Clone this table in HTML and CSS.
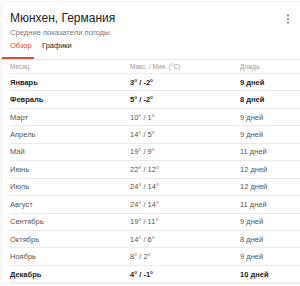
FILE: index.html
```html
<!DOCTYPE html>
<html lang="ru">
<head>
<meta charset="utf-8">
<link rel="stylesheet" href="styles.css">
</head>
<body>
<div class="card">
  <div class="head">
    <div class="titles">
      <div class="title">Мюнхен, Германия</div>
      <div class="subtitle">Средние показатели погоды</div>
    </div>
    <svg class="menu" width="4" height="10" viewBox="0 0 4 10"><circle cx="2" cy="1.5" r="0.9" fill="#666"/><circle cx="2" cy="5" r="0.9" fill="#666"/><circle cx="2" cy="8.5" r="0.9" fill="#666"/></svg>
  </div>
  <div class="tabs">
    <div class="tab active">Обзор</div>
    <div class="tab">Графики</div>
  </div>
  <div class="table">
    <div class="row hdr"><span class="c1">Месяц</span><span class="c2">Макс. / Мин. (°C)</span><span class="c3">Дождь</span></div>
    <div class="row b"><span class="c1">Январь</span><span class="c2">3° / -2°</span><span class="c3">9 дней</span></div>
    <div class="row b"><span class="c1">Февраль</span><span class="c2">5° / -2°</span><span class="c3">8 дней</span></div>
    <div class="row"><span class="c1">Март</span><span class="c2">10° / 1°</span><span class="c3">9 дней</span></div>
    <div class="row"><span class="c1">Апрель</span><span class="c2">14° / 5°</span><span class="c3">9 дней</span></div>
    <div class="row"><span class="c1">Май</span><span class="c2">19° / 9°</span><span class="c3">11 дней</span></div>
    <div class="row"><span class="c1">Июнь</span><span class="c2">22° / 12°</span><span class="c3">12 дней</span></div>
    <div class="row"><span class="c1">Июль</span><span class="c2">24° / 14°</span><span class="c3">12 дней</span></div>
    <div class="row"><span class="c1">Август</span><span class="c2">24° / 14°</span><span class="c3">11 дней</span></div>
    <div class="row"><span class="c1">Сентябрь</span><span class="c2">19° / 11°</span><span class="c3">9 дней</span></div>
    <div class="row"><span class="c1">Октябрь</span><span class="c2">14° / 6°</span><span class="c3">8 дней</span></div>
    <div class="row"><span class="c1">Ноябрь</span><span class="c2">8° / 2°</span><span class="c3">9 дней</span></div>
    <div class="row b"><span class="c1">Декабрь</span><span class="c2">4° / -1°</span><span class="c3">10 дней</span></div>
  </div>
</div>
</body>
</html>
```
FILE: styles.css
```css
html, body { margin: 0; padding: 0; background: #fff; overflow: hidden; }
body { width: 300px; height: 286px; font-family: Arial, "Liberation Sans", sans-serif; }
.card {
  margin: 2px 0 0 2px;
  width: 310px;
  background: #fff;
  box-shadow: 0 0 2px rgba(0,0,0,0.2);
  border-radius: 2px;
}
.head { display: flex; justify-content: space-between; padding: 9px 22px 0 8px; }
.title { font-size: 12px; color: #222; line-height: 15px; }
.subtitle { font-size: 7.6px; color: #777; line-height: 11px; margin-top: 1px; }
.menu { margin-top: 3px; }
.tabs { display: flex; margin-top: 5px; border-bottom: 1px solid #e8e8e8; }
.tab { font-size: 7.5px; color: #222; padding: 0 8px; height: 16px; line-height: 6px; box-sizing: border-box; }
.tab.active { color: #dd4b39; border-bottom: 2px solid #dd4b39; width: 32px; }
.table { padding: 0 8px; }
.row { display: flex; height: 17.45px; align-items: center; border-bottom: 1px solid #ebebeb; font-size: 7.5px; color: #555; box-sizing: border-box; }
.row.hdr { height: 14px; color: #999; font-size: 6.5px; }
.row.b { color: #222; font-weight: bold; }
.c1 { width: 120px; }
.c2 { width: 110px; }
.c3 { flex: 1; }
```
